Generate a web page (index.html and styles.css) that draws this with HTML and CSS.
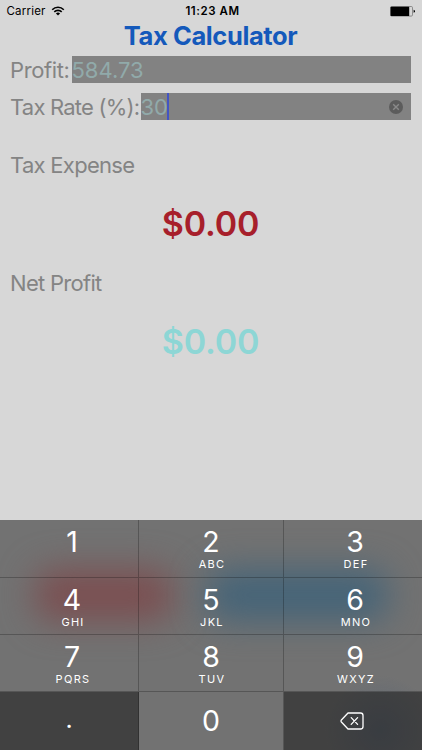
FILE: index.html
```html
<!DOCTYPE html>
<html lang="en">

<head>
    <meta charset="UTF-8">
    <meta name="viewport" content="width=device-width, initial-scale=1.0">
    <title>Tax Calculator</title>
    <link rel="stylesheet" href="styles.css">
</head>

<body>
    <div class="status-bar">
        <div class="carrier">
            <span>Carrier</span>
            <svg class="wifi" viewBox="0 0 14 10" width="14" height="10">
                <path d="M1.2 3.7a8.2 8.2 0 0 1 11.6 0M3.3 5.9a5.2 5.2 0 0 1 7.4 0" fill="none" stroke="#000" stroke-width="1.6"/>
                <path d="M4.9 7.5a3 3 0 0 1 4.2 0L7 9.6z"/>
            </svg>
        </div>
        <div class="clock">11:23 AM</div>
        <svg class="battery" viewBox="0 0 26 11" width="26" height="11">
            <rect x=".5" y=".5" width="22" height="9.6" rx="1.2" fill="none" stroke="#777" stroke-width=".8"/>
            <rect x=".6" y=".8" width="18.6" height="9.2" rx=".6"/>
            <path d="M23.6 3.8q1.4.2 1.4 1.5t-1.4 1.5z"/>
        </svg>
    </div>

    <main class="calculator">
        <h1 class="title">Tax Calculator</h1>
        <div class="field-row">
            <label class="label profit-label">Profit:</label>
            <div class="field">584.73</div>
        </div>
        <div class="field-row">
            <label class="label rate-label">Tax Rate (%):</label>
            <div class="field">30<span class="caret"></span>
                <svg class="clear" viewBox="0 0 14 14" width="14" height="14">
                    <circle cx="7" cy="7" r="7" fill="#5c5c5c"/>
                    <path d="M4.2 4.2l5.6 5.6M9.8 4.2l-5.6 5.6" stroke="#8a8a8a" stroke-width="1.4"/>
                </svg>
            </div>
        </div>
        <div class="label result-label">Tax Expense</div>
        <div class="amount expense">$0.00</div>
        <div class="label result-label">Net Profit</div>
        <div class="amount net">$0.00</div>
    </main>

    <div class="keypad">
        <div class="key"><span class="digit">1</span></div>
        <div class="key"><span class="digit">2</span><span class="letters">ABC</span></div>
        <div class="key"><span class="digit">3</span><span class="letters">DEF</span></div>
        <div class="key"><span class="digit">4</span><span class="letters">GHI</span></div>
        <div class="key"><span class="digit">5</span><span class="letters">JKL</span></div>
        <div class="key"><span class="digit">6</span><span class="letters">MNO</span></div>
        <div class="key"><span class="digit">7</span><span class="letters">PQRS</span></div>
        <div class="key"><span class="digit">8</span><span class="letters">TUV</span></div>
        <div class="key"><span class="digit">9</span><span class="letters">WXYZ</span></div>
        <div class="key dark"><span class="digit point">.</span></div>
        <div class="key zero"><span class="digit">0</span></div>
        <div class="key dark delete">
            <svg viewBox="0 0 24 18" width="24" height="18">
                <path d="M8 1h12.5Q23 1 23 3.5v11Q23 17 20.5 17H8L1.4 10Q.6 9 1.4 8z" fill="none" stroke="#fff" stroke-width="1.3" stroke-linejoin="round"/>
                <path d="M11.2 5.6l6.400 6.800M17.600 5.600l-6.400 6.800" stroke="#fff" stroke-width="1.3" stroke-linecap="round"/>
            </svg>
        </div>
    </div>
</body>

</html>
```
FILE: styles.css
```css
* {
    box-sizing: border-box;
}

body {
    margin: 0;
    height: 750px;
    display: flex;
    flex-direction: column;
    overflow: hidden;
    background-color: #d7d7d7;
    font-family: Inter, "Liberation Sans", sans-serif;
}

.status-bar {
    height: 22px;
    display: grid;
    grid-template-columns: 1fr auto 1fr;
    align-items: center;
    padding: 0 6px;
    font-size: 11.5px;
}

.carrier {
    display: flex;
    align-items: center;
    gap: 5px;
    padding-left: 0.5px;
    letter-spacing: 0.2px;
}

.clock {
    padding-left: 3px;
    font-weight: 600;
    letter-spacing: 0.55px;
}

.battery {
    justify-self: end;
}

.calculator {
    flex: 1;
    padding: 0 11px 0 10px;
}

.title {
    margin: 0;
    height: 34px;
    line-height: 28px;
    text-align: center;
    font-size: 25.5px;
    font-weight: 700;
    letter-spacing: -0.4px;
    color: #1459bb;
}

.field-row {
    display: flex;
    height: 27px;
    margin-bottom: 10px;
}

.label {
    font-size: 22px;
    line-height: 28px;
    letter-spacing: -0.78px;
    color: #848484;
    white-space: nowrap;
}

.profit-label {
    width: 61.5px;
    letter-spacing: -0.4px;
}

.rate-label {
    width: 130.5px;
}

.field {
    flex: 1;
    display: flex;
    align-items: center;
    background-color: #828282;
    color: #91aaaa;
    font-size: 22px;
}

.caret {
    width: 2px;
    height: 27px;
    margin-left: -1px;
    background-color: #4355c4;
}

.clear {
    margin-left: auto;
    margin-right: 8px;
}

.result-label {
    margin-top: 31px;
    height: 28px;
    letter-spacing: -0.7px;
}

.amount {
    height: 59px;
    padding-top: 24px;
    line-height: 42px;
    text-align: center;
    font-size: 34px;
    font-weight: 600;
    letter-spacing: -0.2px;
}

.expense {
    color: #a71f2b;
}

.net {
    color: #8dd6d5;
}

.keypad {
    height: 230.5px;
    display: grid;
    grid-template-columns: 139px 145px 1fr;
    grid-template-rows: 58px 57px 57px 1fr;
    color: #fff;
    background:
        radial-gradient(ellipse 55px 55px at 380px 210px, rgba(45, 75, 115, 0.3), transparent),
        #727272;
    position: relative;
}

/* Colours of the buttons behind the keyboard */
.keypad::before,
.keypad::after {
    content: "";
    position: absolute;
    top: 49px;
    height: 52px;
    border-radius: 20px;
    filter: blur(17px);
}

.keypad::before {
    left: 35px;
    width: 138px;
    background-color: #7b4f51;
}

.keypad::after {
    left: 206px;
    width: 182px;
    background-color: #456478;
}

.key {
    z-index: 1;
    display: flex;
    flex-direction: column;
    align-items: center;
    padding-top: 5px;
    border-right: 1px solid rgba(0, 0, 0, 0.24);
    border-bottom: 1px solid rgba(0, 0, 0, 0.24);
}

.key:nth-child(3n) {
    padding-left: 4px;
    border-right: none;
}

.key:nth-child(3n + 1):not(.dark) {
    padding-left: 6px;
}

.digit {
    font-size: 28.5px;
    line-height: 33px;
    font-weight: 400;
}

.letters {
    font-size: 11px;
    line-height: 12px;
    letter-spacing: 1.3px;
    padding-left: 2px;
}

.key.zero,
.key.dark {
    padding-top: 12px;
    border-bottom: none;
}

.key.dark {
    background-color: rgba(36, 36, 36, 0.62);
}

.point {
    font-size: 25px;
    line-height: 31px;
}

.key.delete {
    padding-top: 20px;
    padding-left: 0;
    padding-right: 2px;
}
```
